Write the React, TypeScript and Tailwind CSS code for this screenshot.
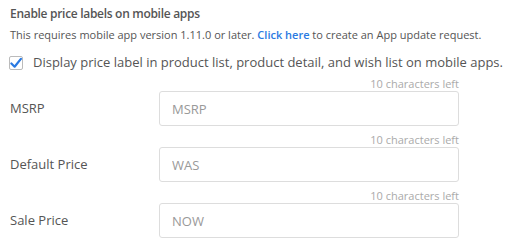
import React from 'react';

const rows = [
  { label: 'MSRP', placeholder: 'MSRP' },
  { label: 'Default Price', placeholder: 'WAS' },
  { label: 'Sale Price', placeholder: 'NOW' },
];

export default function App() {
  return (
    <div className="w-[517px] h-[248px] bg-white px-[10px] pt-1 text-[#555]" style={{ fontFamily: '"Open Sans", sans-serif' }}>
      <div className="text-[12px] leading-[20px] font-semibold tracking-[-0.3px]">Enable price labels on mobile apps</div>
      <div className="text-[11px] leading-[18px] mt-[2px] whitespace-nowrap">
        This requires mobile app version 1.11.0 or later.{' '}
        <a href="#" className="text-[#2a7ae2] font-semibold">Click here</a> to create an App update request.
      </div>
      <label className="flex items-center gap-[10px] mt-2 h-[22px]">
        <span className="w-[14px] h-[14px] border border-[#bbb] rounded-[2px] flex items-center justify-center shrink-0 ml-[-1px]">
          <svg width="13" height="12" viewBox="0 0 13 12" className="mt-[-1px]">
            <path d="M1.5 6.5 L5 10 L11.8 1.5" fill="none" stroke="#2a7ae2" strokeWidth="2.4" strokeLinecap="round" strokeLinejoin="round" />
          </svg>
        </span>
        <span className="text-[13px] whitespace-nowrap">Display price label in product list, product detail, and wish list on mobile apps.</span>
      </label>
      <div className="mt-[3px]">
        {rows.map((r) => (
          <div key={r.label} className="flex mb-[7px]">
            <div className="w-[149px] shrink-0 flex items-end h-[49px] pb-[8px] text-[13px]">{r.label}</div>
            <div className="w-[300px]">
              <div className="text-right text-[11px] leading-[14px] text-[#aaa]">10 characters left</div>
              <input
                placeholder={r.placeholder}
                className="w-full h-[35px] border border-[#ddd] rounded-[3px] px-3 text-[13px] placeholder:text-[#999] outline-none"
              />
            </div>
          </div>
        ))}
      </div>
    </div>
  );
}
